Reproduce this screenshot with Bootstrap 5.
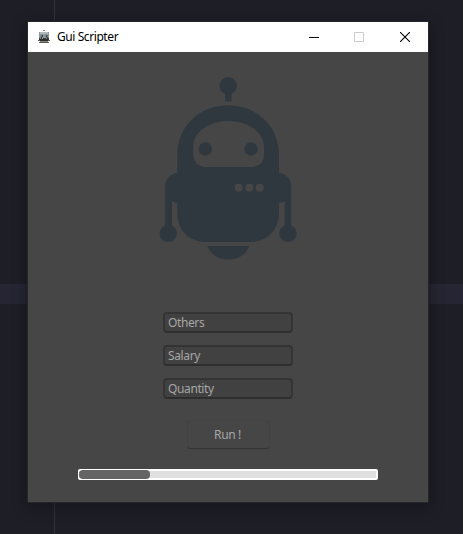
<!DOCTYPE html>
<html lang="en">
<head>
<meta charset="utf-8">
<meta name="viewport" content="width=device-width, initial-scale=1">
<title>Gui Scripter</title>
<link href="https://cdn.jsdelivr.net/npm/bootstrap@5.3.0/dist/css/bootstrap.min.css" rel="stylesheet">
<style>
body{height:534px;background:linear-gradient(#32313e,#32313e) 54px 0/1px 100% no-repeat,linear-gradient(#262533,#262533) 0 284px/100% 20px no-repeat,#1e1e27;font:12px/16px "Noto Sans","Open Sans",sans-serif;padding:22px 35px 32px 28px}
.app-window{width:400px;height:480px;background:#464646;box-shadow:0 0 0 1px #252628,0 3px 14px 2px rgba(0,0,0,.32)}
.title-bar{height:30px;color:#000;padding-left:9px}
.app-name{margin-left:6px;font-size:12px;letter-spacing:-.42px}
.win-btn{width:46px;height:30px;background:none;border:0;padding:0 0 1px}
.win-btn.minimize svg{margin-left:2px}
.robot{display:block;width:156px;height:200px;margin:13px 0 0 122px}
.fields{gap:12px;margin-top:47px}
.field{width:130px;height:21px;border:2px solid #343434;border-bottom-color:#2e2e2e;border-radius:4px;background:#414141;color:#a6a6a6;padding:0 3px;font-size:12px;line-height:18px;letter-spacing:-.38px;box-shadow:none}
.field::placeholder{color:#a6a6a6;opacity:1}
.run{width:81px;height:27px;margin-top:22px;border:0;border-radius:2px;background:#464646;color:#a6a6a6;box-shadow:0 1px 1px #333,0 0 1px #3a3a3a;font-size:12px;padding:0 1px 0 0;letter-spacing:-.35px}
.meter{width:300px;height:11px;margin-top:21px;background:#e0e0e0;border:2px solid #fff;border-left-width:1px;border-radius:2px}
.meter-fill{height:9px;margin-top:-1px;background:#646464;border-radius:4px}
</style>
<script src="https://cdn.jsdelivr.net/npm/bootstrap@5.3.0/dist/js/bootstrap.bundle.min.js"></script>
</head>
<body class="overflow-hidden">
<main class="app-window d-flex flex-column">
<header class="title-bar bg-white d-flex align-items-center">
<svg width="14" height="14" viewBox="0 0 14 14" shape-rendering="crispEdges" aria-hidden="true"><path fill="#6d8791" d="M6 0h2v1H6z"/><path fill="#8b9799" d="M2 2h10v7H2z"/><path fill="#adb9ba" d="M3 2h8v2H3z"/><path fill="#74828a" d="M3 5h2v4H3zM9 5h2v4H9z"/><path fill="#35393b" d="M5 5h1v2H5zM9 5h1v2H9zM4 7h1v2H4zM10 7h1v2h-1zM6 8h3v1H6zM2 8h1v2H2zM11 8h1v2h-1z"/><path fill="#5b5b57" d="M1 10h12v1H1zM2 12h10v1H2z"/><path fill="#302e2a" d="M3 9h8v2H3z"/><path fill="#8a857b" d="M3 11h8v1H3z"/></svg>
<span class="app-name me-auto">Gui Scripter</span>
<button class="win-btn minimize d-flex align-items-center justify-content-center" aria-label="Minimize"><svg width="10" height="10"><path d="M0 5.5h10" stroke="#000"/></svg></button>
<button class="win-btn d-flex align-items-center justify-content-center" aria-label="Maximize"><svg width="10" height="10"><path d="M.5.5h9v9h-9z" fill="none" stroke="#ccc"/></svg></button>
<button class="win-btn d-flex align-items-center justify-content-center" aria-label="Close"><svg width="10" height="10"><path d="M0 0l10 10M10 0L0 10" stroke="#000" stroke-width="1.1"/></svg></button>
</header>
<svg class="robot" viewBox="150 65 156 200" fill="#30383f" aria-label="Robot">
<circle cx="228.2" cy="85.8" r="8.7"/><path d="M225 92h6.5v9.5H225z"/>
<path fill-rule="evenodd" d="M177.3 155C177.3 126 200 105.3 228.2 105.3S279 126 279 155V213C279 230 267 242 250 242H206C189 242 177.3 230 177.3 213ZM205 167H252Q264 166 264 154V146C263 131 247 121 228.500 121S194 131 193.300 146V155Q194 166 205 167Z"/>
<path d="M178 172.500C170 174 165.200 179 165.200 187V228H172V201.300Q174.500 202.800 178 203ZM278.500 172.500C286.500 174 291.200 179 291.200 187V228H284.500V201.300Q282 202.800 278.500 203Z"/>
<circle cx="168.300" cy="233.400" r="8.700"/><circle cx="288" cy="233.400" r="8.700"/>
<circle cx="205.300" cy="149" r="6.800"/><circle cx="251" cy="149" r="6.800"/>
<path d="M207.300 246H249.300C246 255 238 259.600 228.300 259.600S210.500 255 207.300 246Z"/>
<g fill="#464646"><circle cx="238.700" cy="187.800" r="4"/><circle cx="249.300" cy="187.800" r="4"/><circle cx="259.800" cy="187.800" r="4"/></g>
</svg>
<form class="d-flex flex-column align-items-center">
<div class="fields d-flex flex-column">
<input class="field" placeholder="Others" aria-label="Others">
<input class="field" placeholder="Salary" aria-label="Salary">
<input class="field" placeholder="Quantity" aria-label="Quantity">
</div>
<button type="button" class="run">Run !</button>
<div class="meter" role="progressbar" aria-label="Progress" aria-valuenow="24" aria-valuemin="0" aria-valuemax="100"><div class="meter-fill" style="width:24%"></div></div>
</form>
</main>
</body>
</html>
